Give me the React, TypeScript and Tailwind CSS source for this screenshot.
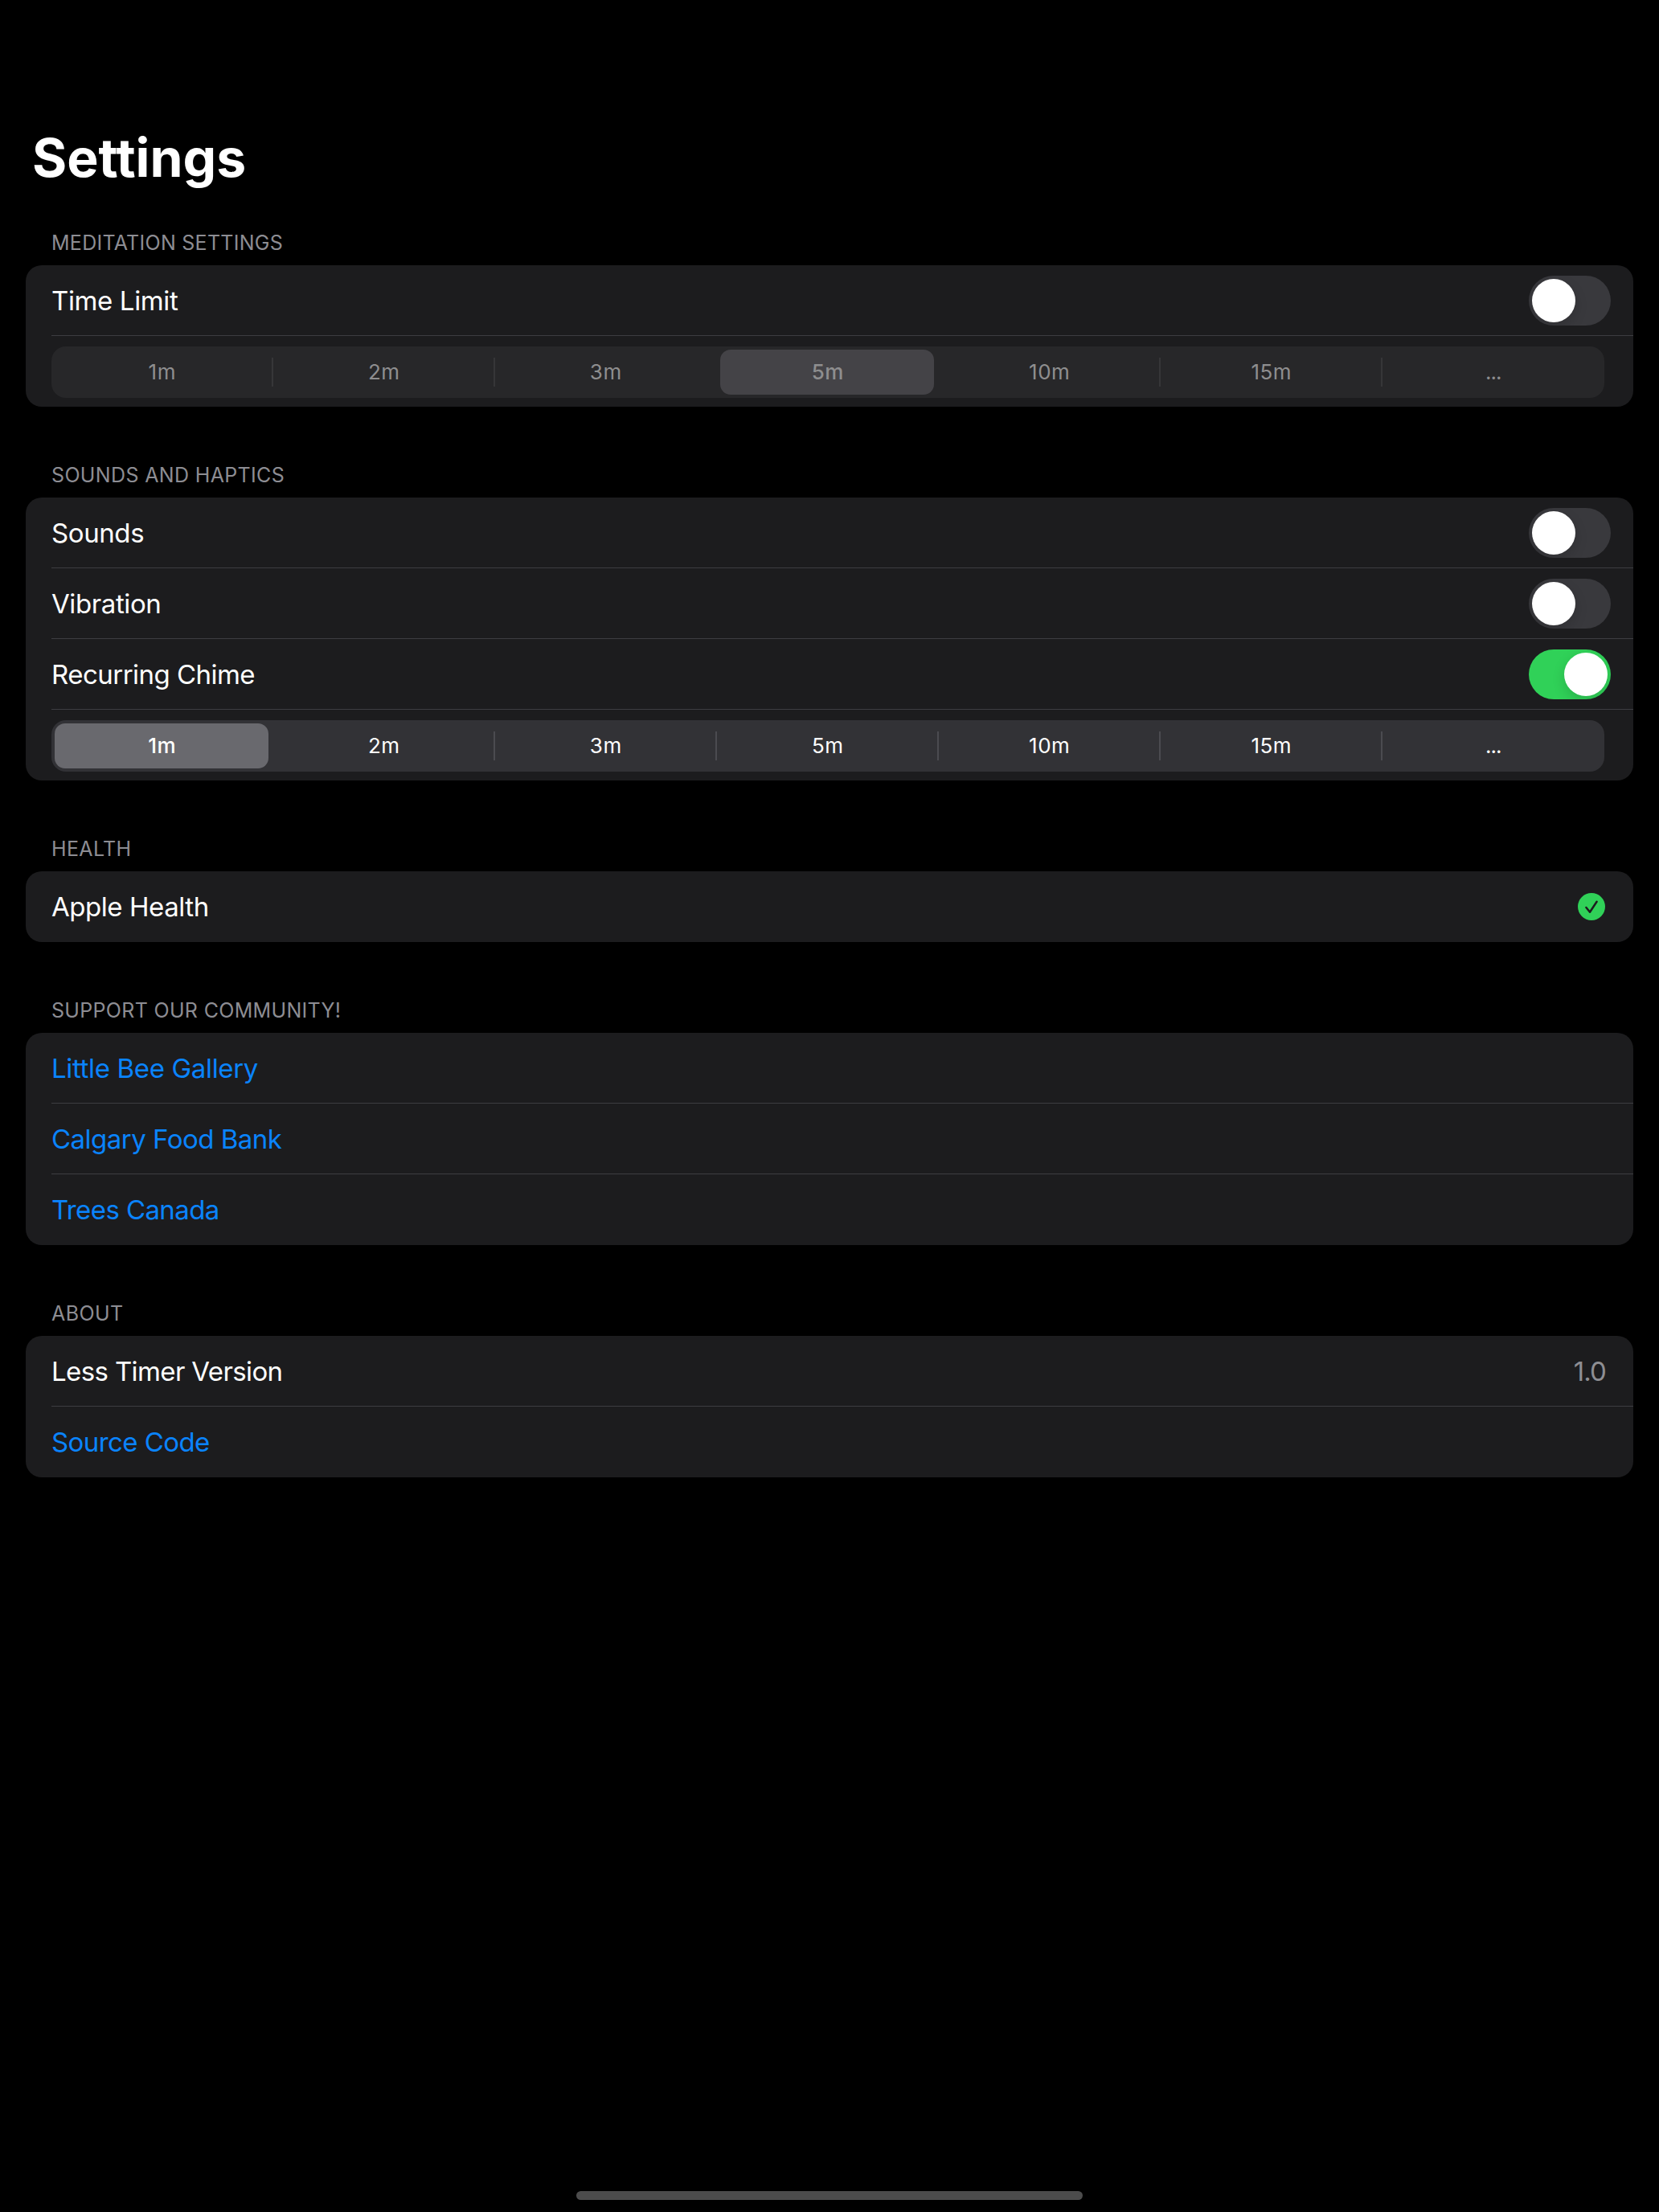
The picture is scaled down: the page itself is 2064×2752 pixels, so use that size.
import type { ReactNode } from "react";

const INTERVALS = ["1m", "2m", "3m", "5m", "10m", "15m", "..."];

function Section({ title, tracking, first = false, children }: { title: string; tracking: string; first?: boolean; children: ReactNode }) {
  return (
    <section className="px-8">
      <div className={`flex items-end pb-[13px] pl-8 ${first ? "h-[94px]" : "h-[113px]"}`}>
        <h2 className={`text-[25px] leading-[30px] text-[#8d8d93] ${tracking}`}>{title}</h2>
      </div>
      <div className="overflow-hidden rounded-[20px] bg-[#1c1c1e]">{children}</div>
    </section>
  );
}

function Row({ label, tracking, link = false, last = false, end = "pr-7", children }: { label: string; tracking: string; link?: boolean; last?: boolean; end?: string; children?: ReactNode }) {
  return (
    <div className="relative flex h-22 items-center justify-between pl-8">
      {link ? (
        <a href="#" className={`text-[33px] leading-10 text-[#0a84ff] ${tracking}`}>{label}</a>
      ) : (
        <span className={`text-[33px] leading-10 text-white ${tracking}`}>{label}</span>
      )}
      <div className={`flex items-center ${end}`}>{children}</div>
      {!last && <div className="absolute right-0 bottom-0 left-8 h-px bg-[#3d3d41]" />}
    </div>
  );
}

function Toggle({ on = false }: { on?: boolean }) {
  return (
    <button
      role="switch"
      aria-checked={on}
      className={`flex h-[62px] w-[102px] items-center overflow-hidden rounded-full px-1 ${on ? "justify-end bg-[#30d158]" : "justify-start bg-[#39393d]"}`}
    >
      <span className="size-[54px] rounded-full bg-white shadow-[0_6px_16px_rgba(0,0,0,0.15)]" />
    </button>
  );
}

function Segmented({ selected, disabled = false }: { selected: number; disabled?: boolean }) {
  const line = disabled ? "bg-[#363638]" : "bg-[#4b4b50]";
  return (
    <div className="h-22 pt-[13px] pl-8">
      <div className={`flex h-16 w-[1932px] items-center rounded-[18px] ${disabled ? "bg-[#272729] text-[#8e8e8f]" : "bg-[#323236] text-white"}`}>
        {INTERVALS.map((label, i) => {
          const active = i === selected;
          const ruled = i < INTERVALS.length - 1 && !active && i + 1 !== selected;
          const fill = !active ? "" : disabled ? "bg-[#444347]" : "bg-[#69696e]";
          return (
            <div key={label} className="flex w-[276px] shrink-0 items-center justify-between pl-1">
              <div
                className={`flex h-14 w-[266px] items-center justify-center rounded-[13px] pl-[1.5px] text-[26px] leading-8 ${active ? "font-medium" : "font-normal"} ${label === "..." ? "tracking-[-1px]" : "tracking-[0.5px]"} ${fill}`}
              >
                {label}
              </div>
              {ruled && <div className={`h-9 w-0.5 ${line}`} />}
            </div>
          );
        })}
      </div>
    </div>
  );
}

function CheckBadge() {
  return (
    <svg viewBox="0 0 34 34" className="size-[34px]">
      <circle cx="17" cy="17" r="17" fill="#30d158" />
      <path d="M10.4 18 L15 23.8 L23.6 10.8" fill="none" stroke="#1c1c1e" strokeWidth="2.5" strokeLinecap="round" strokeLinejoin="round" />
    </svg>
  );
}

export default function App() {
  return (
    <main className="flex h-[2752px] w-[2064px] flex-col bg-black font-['Inter',sans-serif]">
      <h1 className="mt-[156px] pl-10 text-[66px] leading-[80px] font-bold text-white">Settings</h1>

      <Section title="MEDITATION SETTINGS" tracking="tracking-[0.27px]" first>
        <Row label="Time Limit" tracking="tracking-[-0.375px]">
          <Toggle />
        </Row>
        <Segmented selected={3} disabled />
      </Section>

      <Section title="SOUNDS AND HAPTICS" tracking="tracking-[0.35px]">
        <Row label="Sounds" tracking="tracking-[-0.4px]">
          <Toggle />
        </Row>
        <Row label="Vibration" tracking="tracking-[-0.4px]">
          <Toggle />
        </Row>
        <Row label="Recurring Chime" tracking="tracking-[-0.53px]">
          <Toggle on />
        </Row>
        <Segmented selected={0} />
      </Section>

      <Section title="HEALTH" tracking="tracking-[0.355px]">
        <Row label="Apple Health" tracking="tracking-[-0.45px]" end="pr-[35px]" last>
          <CheckBadge />
        </Row>
      </Section>

      <Section title="SUPPORT OUR COMMUNITY!" tracking="tracking-[0.32px]">
        <Row label="Little Bee Gallery" tracking="tracking-[-0.34px]" link />
        <Row label="Calgary Food Bank" tracking="tracking-[-0.51px]" link />
        <Row label="Trees Canada" tracking="tracking-[-0.6px]" link last />
      </Section>

      <Section title="ABOUT" tracking="tracking-[0.4px]">
        <Row label="Less Timer Version" tracking="tracking-[-0.62px]" end="pr-[34px]">
          <span className="text-[33px] leading-10 tracking-[-0.9px] text-[#8e8e93]">1.0</span>
        </Row>
        <Row label="Source Code" tracking="tracking-[-0.58px]" link last />
      </Section>

      <div className="mx-auto mt-auto mb-[15px] h-[11px] w-[630px] rounded-full bg-[#4c4c4c]" />
    </main>
  );
}
